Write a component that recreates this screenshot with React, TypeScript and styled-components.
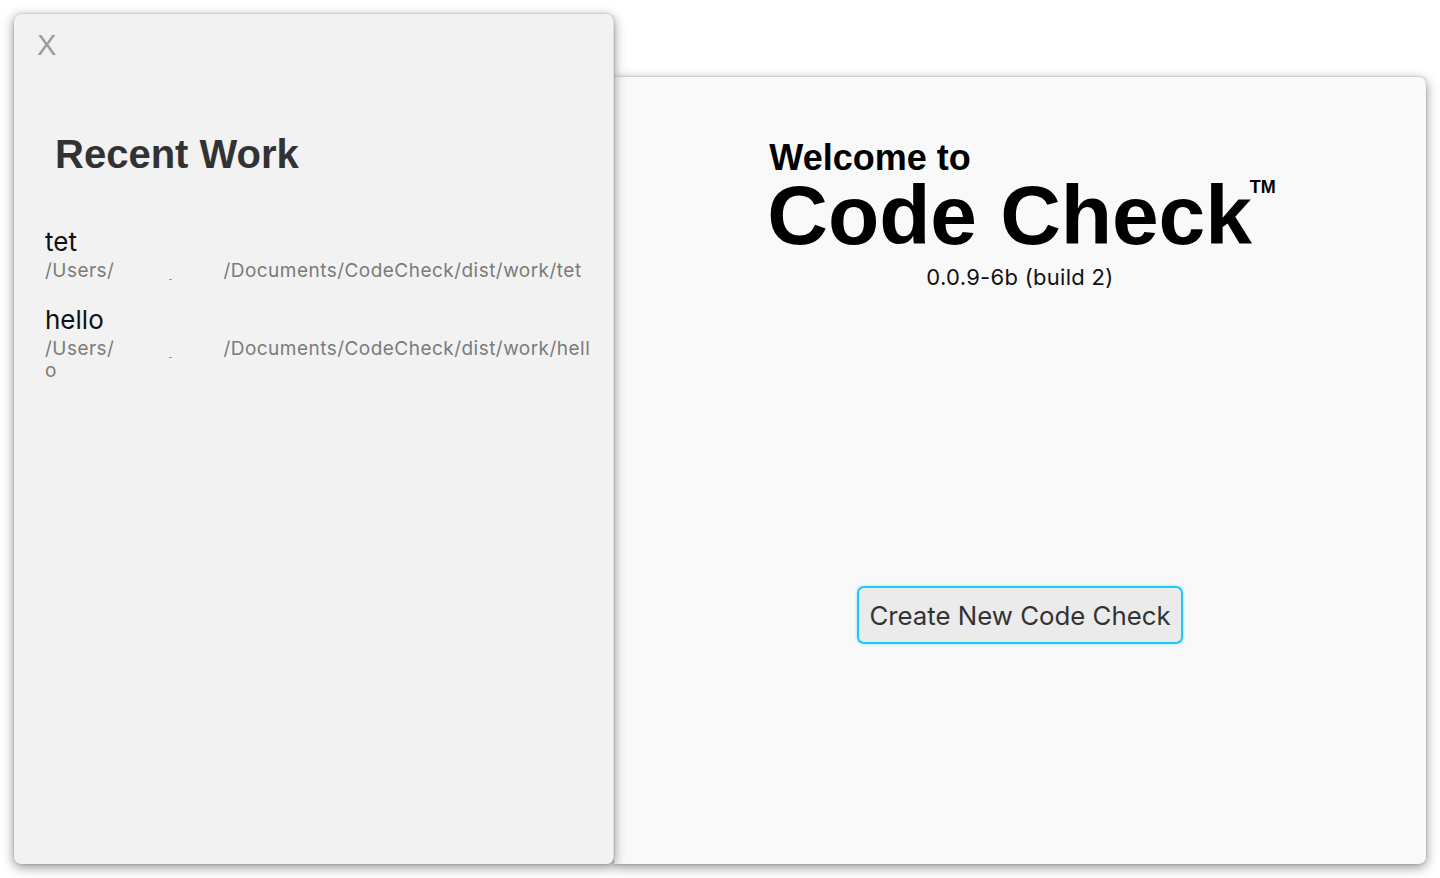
import React from "react";
import styled, { createGlobalStyle } from "styled-components";

const Global = createGlobalStyle`
  html, body { margin: 0; padding: 0; background: #ffffff; }
  body { font-family: "Liberation Sans", Arial, sans-serif; }
  * { box-sizing: border-box; }
`;

const Stage = styled.div`
  width: 1440px;
  height: 878px;
  padding: 14px 14px 14px 14px;
  display: flex;
  align-items: flex-end;
  background: #ffffff;
`;

const LeftWindow = styled.aside`
  position: relative;
  z-index: 2;
  width: 600px;
  height: 850px;
  background: #f2f2f2;
  border-radius: 7px;
  border-right: 1px solid #dedede;
  box-shadow: 0 3px 12px rgba(0, 0, 0, 0.45), 0 0 2px rgba(0, 0, 0, 0.25);
  padding: 17px 0 0 23px;
  display: flex;
  flex-direction: column;
`;

const CloseButton = styled.div`
  font-family: "Liberation Sans", Arial, sans-serif;
  font-size: 29px;
  line-height: 1;
  font-weight: 400;
  color: #9b9b9b;
  width: 20px;
  cursor: pointer;
`;

const Heading = styled.h2`
  margin: 74px 0 0 18px;
  font-family: "Liberation Sans", Arial, sans-serif;
  font-size: 40px;
  line-height: 1;
  font-weight: 700;
  color: #323232;
`;

const RecentList = styled.div`
  margin: 53px 0 0 8px;
  display: flex;
  flex-direction: column;
  gap: 23px;
`;

const Item = styled.div`
  display: flex;
  flex-direction: column;
`;

const ItemName = styled.div`
  font-family: "Inter", "Liberation Sans", sans-serif;
  font-size: 26px;
  line-height: 30px;
  color: #111111;
  margin-bottom: 3px;
`;

const ItemPath = styled.div`
  font-family: "Inter", "Liberation Sans", sans-serif;
  font-size: 19px;
  line-height: 22px;
  color: #7b7b7b;
  letter-spacing: 0.47px;
`;

const Redacted = styled.span`
  display: inline-block;
  position: relative;
  width: 109px;
  height: 1px;
  &::after {
    content: "";
    position: absolute;
    left: 55px;
    top: 3px;
    width: 3px;
    height: 1px;
    background: #9a9a9a;
  }
`;

const RightWindow = styled.main`
  flex: 1;
  height: 787px;
  background: #f9f9f9;
  border-radius: 0 7px 7px 0;
  box-shadow: 0 3px 12px rgba(0, 0, 0, 0.45), 0 0 2px rgba(0, 0, 0, 0.25);
  display: flex;
  flex-direction: column;
  align-items: center;
  padding-top: 63px;
`;

const TitleBlock = styled.div`
  display: flex;
  flex-direction: column;
  align-items: flex-start;
  margin-left: 3px;
`;

const Welcome = styled.div`
  font-family: "Liberation Sans", Arial, sans-serif;
  font-size: 36px;
  line-height: 1;
  font-weight: 700;
  color: #000;
  margin-left: 2px;
`;

const Product = styled.div`
  font-family: "Liberation Sans", Arial, sans-serif;
  font-size: 84px;
  line-height: 1;
  font-weight: 700;
  color: #000;
  margin-top: -3px;
  letter-spacing: -0.1px;
`;

const Tm = styled.sup`
  font-size: 18px;
  font-weight: 700;
  vertical-align: top;
  position: relative;
  top: 5px;
  margin-left: -2px;
`;

const Version = styled.div`
  font-family: "Inter", "Liberation Sans", sans-serif;
  font-size: 22px;
  line-height: 1;
  color: #111;
  margin-top: 9px;
  letter-spacing: 0.3px;
`;

const CreateButton = styled.button`
  margin-top: 298px;
  width: 326px;
  height: 58px;
  background: #ebebeb;
  border: 2px solid #22c8f5;
  border-radius: 7px;
  box-shadow: 0 0 3px rgba(34, 200, 245, 0.55);
  font-family: "Inter", "Liberation Sans", sans-serif;
  font-size: 25.8px;
  color: #333333;
  padding: 0;
  cursor: pointer;
`;

type Work = { name: string; lines: string[] };

const works: Work[] = [
  { name: "tet", lines: ["/Documents/CodeCheck/dist/work/tet"] },
  { name: "hello", lines: ["/Documents/CodeCheck/dist/work/hell", "o"] },
];

export default function App() {
  return (
    <>
      <Global />
      <Stage>
        <LeftWindow>
          <CloseButton>X</CloseButton>
          <Heading>Recent Work</Heading>
          <RecentList>
            {works.map((w) => (
              <Item key={w.name}>
                <ItemName>{w.name}</ItemName>
                <ItemPath>
                  /Users/
                  <Redacted />
                  {w.lines[0]}
                </ItemPath>
                {w.lines.slice(1).map((l) => (
                  <ItemPath key={l}>{l}</ItemPath>
                ))}
              </Item>
            ))}
          </RecentList>
        </LeftWindow>
        <RightWindow>
          <TitleBlock>
            <Welcome>Welcome to</Welcome>
            <Product>
              Code Check<Tm>TM</Tm>
            </Product>
          </TitleBlock>
          <Version>0.0.9-6b (build 2)</Version>
          <CreateButton>Create New Code Check</CreateButton>
        </RightWindow>
      </Stage>
    </>
  );
}
